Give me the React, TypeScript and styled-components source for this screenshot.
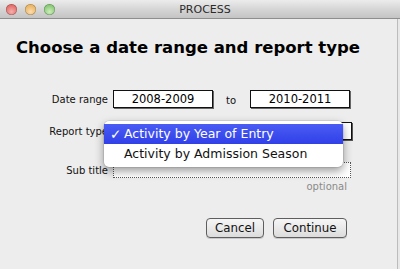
import React from "react";
import styled, { createGlobalStyle } from "styled-components";

const Global = createGlobalStyle`
  html, body { margin: 0; padding: 0; }
  body { background: #e6e6e6; font-family: "DejaVu Sans", Verdana, sans-serif; }
`;

const Window = styled.div`
  width: 400px;
  height: 269px;
  display: flex;
  flex-direction: column;
  overflow: hidden;
  background: #e8e8e8;
`;

const TitleBar = styled.div`
  height: 18px;
  flex: none;
  display: flex;
  align-items: center;
  position: relative;
  background: linear-gradient(#ececec, #d6d6d6 50%, #c4c4c4);
  border-bottom: 1px solid #8e8e8e;
`;

const Lights = styled.div`
  display: flex;
  gap: 8px;
  padding-left: 6px;
`;

const Light = styled.span<{ $c: string; $d: string }>`
  width: 11px;
  height: 11px;
  border-radius: 50%;
  background: radial-gradient(circle at 50% 70%, ${(p) => p.$c} 0%, ${(p) => p.$d} 95%);
  box-shadow: inset 0 0 0 0.5px rgba(0, 0, 0, 0.3);
`;

const Title = styled.div`
  position: absolute;
  left: 0;
  right: 0;
  top: 0;
  bottom: 0;
  display: flex;
  align-items: center;
  justify-content: center;
  padding-left: 10px;
  font-size: 11px;
  color: #2a2a2a;
  pointer-events: none;
`;

const Panel = styled.div`
  flex: 1;
  margin-right: 2px;
  border-right: 1px solid #bcbcbc;
  background: #ededed;
  padding: 0 16px;
  position: relative;
`;

const Heading = styled.h1`
  margin: 19px 0 0;
  font-size: 16.5px;
  line-height: 20px;
  font-weight: bold;
  color: #000;
`;

const Form = styled.div`
  margin-top: 32px;
  display: grid;
  grid-template-columns: 92px 1fr;
  column-gap: 5px;
  align-items: center;
`;

const Label = styled.div<{ $mt?: number }>`
  font-size: 10px;
  color: #111;
  text-align: right;
  white-space: nowrap;
  margin-top: ${(p) => p.$mt ?? 0}px;
`;

const Field = styled.div<{ $mt?: number }>`
  display: flex;
  align-items: center;
  margin-top: ${(p) => p.$mt ?? 0}px;
`;

const DateBox = styled.div`
  width: 98px;
  height: 16px;
  background: #fff;
  border: 1px solid #111;
  box-shadow: 1px 1px 0 #666;
  font-size: 11.5px;
  line-height: 16px;
  text-align: center;
  color: #000;
`;

const To = styled.span`
  font-size: 10px;
  color: #111;
  margin: 2px 14px 0 13px;
`;

const SelectBox = styled.div`
  width: 237px;
  height: 16px;
  background: #fff;
  border: 1px solid #111;
  box-shadow: 1px 1px 0 #555;
`;

const SubField = styled.div`
  width: 236px;
  height: 14px;
  background: #fff;
  border: 1px dotted #555;
`;

const Hint = styled.div`
  grid-column: 2;
  margin-top: 3px;
  width: 234px;
  text-align: right;
  font-size: 10px;
  color: #8a8a8a;
`;

const Buttons = styled.div`
  display: flex;
  justify-content: flex-end;
  gap: 9px;
  margin-top: 26px;
  padding-right: 34px;
`;

const Button = styled.div<{ $w: number }>`
  width: ${(p) => p.$w}px;
  height: 18px;
  box-sizing: content-box;
  border: 1px solid #5e5e5e;
  border-radius: 4px;
  background: linear-gradient(#f6f6f6, #dcdcdc);
  box-shadow: 0 1px 0 rgba(0, 0, 0, 0.15);
  font-size: 11.8px;
  line-height: 18px;
  text-align: center;
  color: #111;
`;

const Menu = styled.div`
  position: absolute;
  left: 104px;
  top: 102px;
  width: 239px;
  padding: 3px 0 4px;
  background: #fff;
  border-radius: 5px;
  box-shadow: 0 0 0 0.5px rgba(0, 0, 0, 0.15), 0 4px 10px rgba(0, 0, 0, 0.4);
`;

const Item = styled.div<{ $active?: boolean }>`
  height: 19.5px;
  display: flex;
  align-items: center;
  font-size: 12.5px;
  color: ${(p) => (p.$active ? "#fff" : "#111")};
  background: ${(p) => (p.$active ? "linear-gradient(#4a5cf4, #3040e8)" : "transparent")};
`;

const Check = styled.span`
  width: 20px;
  padding-left: 6px;
  box-sizing: border-box;
  font-size: 13.5px;
  font-weight: bold;
`;

export default function App() {
  return (
    <>
      <Global />
      <Window>
        <TitleBar>
          <Lights>
            <Light $c="#f6b0ae" $d="#d9504c" />
            <Light $c="#fcdcae" $d="#e3a444" />
            <Light $c="#cdeebb" $d="#6cb85a" />
          </Lights>
          <Title>PROCESS</Title>
        </TitleBar>
        <Panel>
          <Heading>Choose a date range and report type</Heading>
          <Form>
            <Label>Date range</Label>
            <Field>
              <DateBox>2008-2009</DateBox>
              <To>to</To>
              <DateBox>2010-2011</DateBox>
            </Field>
            <Label $mt={14}>Report type</Label>
            <Field $mt={14}>
              <SelectBox />
            </Field>
            <Label $mt={22}>Sub title</Label>
            <Field $mt={22}>
              <SubField />
            </Field>
            <Hint>optional</Hint>
          </Form>
          <Buttons>
            <Button $w={56}>Cancel</Button>
            <Button $w={72}>Continue</Button>
          </Buttons>
          <Menu>
            <Item $active>
              <Check>✓</Check>Activity by Year of Entry
            </Item>
            <Item>
              <Check />Activity by Admission Season
            </Item>
          </Menu>
        </Panel>
      </Window>
    </>
  );
}
